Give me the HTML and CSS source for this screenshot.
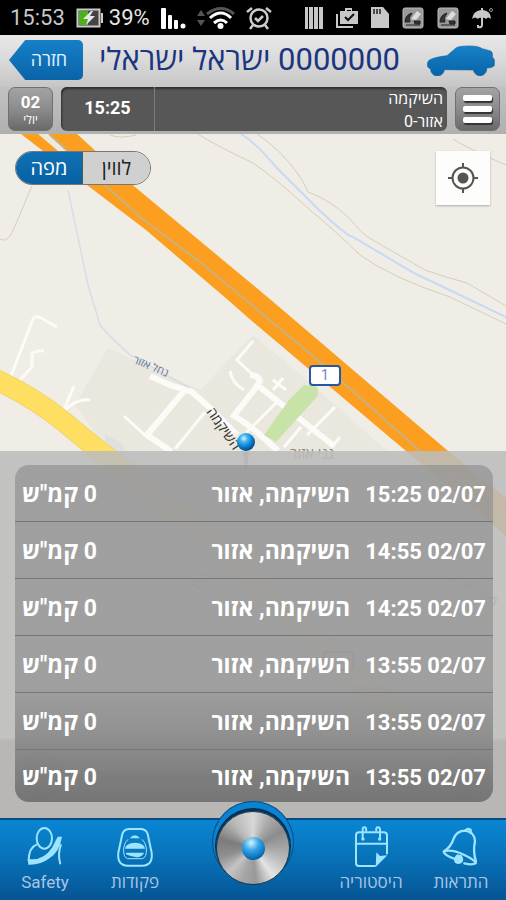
FILE: index.html
```html
<!DOCTYPE html>
<html lang="he" dir="rtl">
<head>
<meta charset="utf-8">
<meta name="viewport" content="width=device-width, initial-scale=1">
<title>ישראל ישראלי</title>
<link rel="stylesheet" href="styles.css">
</head>
<body>
<div class="app">
  <div class="status" dir="ltr">
    <div class="status-group">
      <span class="clock">15:53</span>
      <svg width="28" height="20" viewBox="0 0 28 20"><rect x="1.500" y="1.500" width="22" height="17" fill="#444" stroke="#ccc" stroke-width="2"/><path d="M25 5h2v10h-2z" fill="#ccc"/><path d="M3 3h9v14H3z" fill="#4caf1c"/><path d="M15 3 7 11h5l-2 6 9-9h-5l3-5z" fill="#e8e8e8"/></svg>
      <span class="percent">39%</span>
      <svg class="signal" width="25" height="22" viewBox="0 0 25 22" fill="#fff"><rect x="0" y="1" width="5" height="21" rx="1"/><rect x="7" y="8" width="4" height="14" rx="1"/><rect x="13" y="13" width="4" height="9" rx="1"/><circle cx="22" cy="19" r="2.500"/></svg>
      <svg class="wifi" width="38" height="24" viewBox="0 0 38 24" fill="none"><path d="M4 4 0 10h8zM4 20l-4-6h8z" fill="#555"/><path d="M10 8Q24-3 37 8" stroke="#555" stroke-width="3"/><path d="M13 12Q24 2 34 12M17 17q7-6 13 0" stroke="#fff" stroke-width="3"/><circle cx="23.500" cy="20" r="3" fill="#fff"/></svg>
      <svg width="26" height="24" viewBox="0 0 26 24" fill="none" stroke="#ccc" stroke-width="2.500"><circle cx="13" cy="12" r="8.500"/><path d="m1 6 5-4M25 6l-5-4M7 19l-3 4M19 19l3 4M9 12l3 3 5-5"/></svg>
    </div>
    <div class="status-group end">
      <svg width="18" height="22" viewBox="0 0 18 22" fill="#c8c8c8"><path d="M0 0h3v22H0zM4 0h4v22H4zM9 0h4v22H9zM14 0h4v22h-4z"/></svg>
      <svg width="22" height="22" viewBox="0 0 22 22"><path d="M1 7v13h16" stroke="#c8c8c8" stroke-width="2" fill="none"/><path d="M4 4h5V1h7v3h6v13H4zM11 4h4V3h-4z" fill="#c8c8c8" fill-rule="evenodd"/><path d="m9 10 3 3 6-6" stroke="#111" stroke-width="2" fill="none"/></svg>
      <svg width="18" height="21" viewBox="0 0 18 21"><path d="M0 0h12l6 7v14H0z" fill="#c8c8c8"/><path d="M3 2v5M6 2v5M9 2v5" stroke="#222" stroke-width="1.500"/></svg>
      <svg width="22" height="22" viewBox="0 0 22 22"><rect x="1" y="1" width="20" height="20" rx="2" fill="#999" stroke="#bbb"/><path d="M3 15q0-7 7-9-4 5-2 9zM12 14h6v3h-5zM4 18h14" fill="#333" stroke="#222"/><path d="m9 12 6-8 4 3-5 6z" fill="#ddd"/></svg>
      <svg width="22" height="22" viewBox="0 0 22 22"><rect x="1" y="1" width="20" height="20" rx="2" fill="#999" stroke="#bbb"/><path d="M3 15q0-7 7-9-4 5-2 9zM12 14h6v3h-5zM4 18h14" fill="#333" stroke="#222"/><path d="m9 12 6-8 4 3-5 6z" fill="#ddd"/></svg>
      <svg width="22" height="22" viewBox="0 0 22 22"><path d="M0 12Q1 4 9 3V1h2v2q8 1 8 9-3-3-5 0-2-2-4-1-3-1-4 1-3-3-6 0z" fill="#c8c8c8"/><path d="M10 10v8q0 3-4 2v-2" fill="none" stroke="#c8c8c8" stroke-width="2"/><circle cx="19" cy="3" r="1.500" fill="none" stroke="#999"/></svg>
    </div>
  </div>

  <header class="header">
    <svg class="car" viewBox="525 138 204 92" aria-hidden="true"><defs><linearGradient id="carPaint" x1="0" y1="0" x2="0" y2="1"><stop offset="0" stop-color="#1781c9"/><stop offset="1" stop-color="#0763a8"/></linearGradient></defs><path d="M527 192Q527 178 585 171L612 148Q620 142 652 142Q680 142 690 150L716 157Q723 160 721 174L727 183V200Q722 208 704 208A20 20 0 0 1 664 214L577 213A20 20 0 0 1 536 210Q524 209 527 192Z" fill="url(#carPaint)" stroke="#15619b" stroke-width="2"/></svg>
    <h1 class="title">0000000 ישראל ישראלי</h1>
    <button class="back" type="button">חזרה</button>
  </header>

  <div class="toolbar">
    <button class="tile menu" type="button" aria-label="תפריט"><span></span><span></span><span></span></button>
    <div class="current">
      <div class="address"><span>השיקמה</span><span>אזור-0</span></div>
      <time class="time">15:25</time>
    </div>
    <button class="tile date" type="button"><b>02</b><small>יולי</small></button>
  </div>

  <main class="map">
    <svg class="map-art" viewBox="0 134 506 684" preserveAspectRatio="xMidYMin slice" aria-hidden="true">
      <defs><radialGradient id="pin" cx=".38" cy=".3" r=".7"><stop offset="0" stop-color="#dff5ff"/><stop offset=".3" stop-color="#40b4f0"/><stop offset=".7" stop-color="#0878c8"/><stop offset="1" stop-color="#034a86"/></radialGradient></defs>
      <path d="M0 134h506v684H0z" fill="#f0ede6"/>
      <path d="M108 348 200 390 253 335 300 374 420 480 350 560H190L75 405Z" fill="#e9e7de"/>
      <path d="m105 434 18 10 3 10h-21z" fill="#e0e0e0"/>
      <g fill="none" stroke="#d2cec0"><path d="M32 186 12 233Q6 243 0 239M453 139q12 8 53 26M110 135q10 4 26 0"/><path d="M198 134q15 10 55 29 25 17 57 47 30 25 50 45 30 22 90 42l56 27M257 134q25 17 41 40 7 10 10 18 23 8 43 28 10 13 20 19l54 31q20 7 42 13l39 23" stroke="#d3cfbd"/></g>
      <path d="M241 134q15 9 35 33l42 42q30 28 35 28l61 36 92 44" fill="none" stroke="#c7d9f5" stroke-width="2"/>
      <path d="m68 190 20 95 12 40q10 12 30 30l60 33" fill="none" stroke="#d6dde7" stroke-width="1.500"/>
      <g fill="none" stroke="#fcfbf7" stroke-width="3">
        <path d="m11 376 22-57q3-4 8-1l16 9M19 381l13-14V354q4-4 12-3M63 412l11-26M65 410q12-12 25-10M124 416l25 23M205 412l-30 37M230 371q2 12 14 19M253 341l-16 19 16 15M273 380l13 10M276 403l-30 30M335 407l-28 28M301 427l-17 20M340 437l-8 10M283 378l-10 12"/>
      </g>
      <g fill="none" stroke="#fcfbf7" stroke-width="6"><path d="m150 376 20 9 22 7 18 16 27 27M184 391l-37 44 25 17M232 418l22-28 6-9q-2-6-10-6M256 384l78 62M233 415q20 12 45 36"/></g>
      <path d="m304 385 12 1q5 6-1 13l-39 43-12-7 25-35z" fill="#c8e3a8"/>
      <path d="M-5 379Q35 398 63 421L97 449 200 530 253 582 420 735" fill="none" stroke="#f1d36c" stroke-width="21"/><path d="M-5 379Q35 398 63 421L97 449 200 530 253 582 420 735" fill="none" stroke="#ffdf61" stroke-width="19"/>
      <path d="M21 134 87 185 146 230 228 300 253 322 406 451 506 536V498L448 451 271 300 253 285 135 187 77 134Z" fill="#fc9e20"/>
      <path d="m38 134 20 17h9L49 134z" fill="#eee9df"/><path d="m49 134 56 51 35 32 60 45 53 44 67 56 100 89 86 70" fill="none" stroke="#ccb07d" stroke-width="2"/>
      <rect x="310" y="366" width="30" height="19" rx="3" fill="#fff" stroke="#2457a6" stroke-width="2"/>
      <g class="map-text"><text x="325" y="380" fill="#6d87bf">1</text><text x="151" y="370" transform="rotate(23 151 366)" font-size="11" fill="#657793">נחל אזור</text><text x="223" y="433" transform="rotate(55 223 429)" font-size="14" fill="#303030">השיקמה</text><text x="312" y="459" font-size="15" fill="#8f8a7c">גני אזור</text><text x="196" y="592" transform="rotate(-45 196 592)" font-size="13" fill="#777">המרכבה</text><text class="small" x="474" y="593" transform="rotate(33 474 593)" fill="#666">משה שרת</text></g>
      <path d="m246 480-3-28h6z" fill="#9a9a9a"/><circle cx="246" cy="442" r="9" fill="url(#pin)"/>
      <rect x="324" y="652" width="29" height="18" rx="3" fill="#ddd" stroke="#555" stroke-width="2"/>
      <g fill="#5d7f95"><circle cx="42" cy="776" r="24"/><circle cx="466" cy="776" r="24"/></g><path d="M65 770h378v12H65z" fill="#777"/>
    </svg>
    <div class="map-controls">
      <button class="locate" type="button" aria-label="המיקום שלי"><svg width="30" height="30" viewBox="0 0 30 30" fill="none" stroke="#555" stroke-width="2"><circle cx="15" cy="15" r="10.500"/><circle cx="15" cy="15" r="5.500" fill="#555" stroke="none"/><path d="M15 0v5M15 25v5M0 15h5M25 15h5"/></svg></button>
      <div class="switch"><button type="button">לווין</button><button class="on" type="button">מפה</button></div>
    </div>
    <section class="panel">
      <table class="log">
        <tbody>
          <tr><td class="when"><bdi dir="ltr">15:25 02/07</bdi></td><td>השיקמה, אזור</td><td class="speed">0 קמ"ש</td></tr>
          <tr><td class="when"><bdi dir="ltr">14:55 02/07</bdi></td><td>השיקמה, אזור</td><td class="speed">0 קמ"ש</td></tr>
          <tr><td class="when"><bdi dir="ltr">14:25 02/07</bdi></td><td>השיקמה, אזור</td><td class="speed">0 קמ"ש</td></tr>
          <tr><td class="when"><bdi dir="ltr">13:55 02/07</bdi></td><td>השיקמה, אזור</td><td class="speed">0 קמ"ש</td></tr>
          <tr><td class="when"><bdi dir="ltr">13:55 02/07</bdi></td><td>השיקמה, אזור</td><td class="speed">0 קמ"ש</td></tr>
          <tr><td class="when"><bdi dir="ltr">13:55 02/07</bdi></td><td>השיקמה, אזור</td><td class="speed">0 קמ"ש</td></tr>
        </tbody>
      </table>
    </section>
  </main>

  <nav class="nav">
    <a href="#alerts"><svg viewBox="570 290 120 126"><g fill="none" stroke="#9de4ff" stroke-width="7" stroke-linecap="round" stroke-linejoin="round"><path d="M580 365Q600 352 607 330Q616 304 644 304Q672 309 672 337Q665 365 675 397"/><path d="M612 389Q580 377 578 367Q600 358 640 377Q672 392 674 402Q664 408 640 402M645 302q5-7 14 0v9"/></g><path d="M618 375q-14 14-6 25 12 9 22-1 6-9-2-21z" fill="#9de4ff"/></svg><span>התראות</span></a>
    <a href="#history"><svg viewBox="296 290 120 126"><g fill="none" stroke="#9de4ff" stroke-width="6"><path d="M370 410H320Q311 410 311 400V318Q311 309 320 309H394Q404 309 404 318V375M311 343H404"/><path d="M331 330V301Q331 292 337 294 343 294 341 306M372 306Q370 293 378 294 383 294 383 303V330"/></g><path d="M405 378 370 413 372 369 383 380z" fill="#9de4ff"/><circle cx="332" cy="329" r="5" fill="#9de4ff"/><circle cx="382" cy="329" r="5" fill="#9de4ff"/></svg><span>היסטוריה</span></a>
    <button class="knob" type="button" aria-label="ראשי"><i></i></button>
    <a href="#commands"><svg viewBox="347 290 120 126"><path d="M388 299H426Q440 300 445 314L457 370Q461 409 429 409H385Q353 409 357 370L369 314Q374 300 388 299Z" fill="none" stroke="#9de4ff" stroke-width="6"/><path d="M391 327q16-18 31 0zM377 358q2-17 30-18 28 1 30 18zM380 370h54q-10 24-54 5z" fill="#9de4ff"/><path d="M386 330q-10 8-13 26-2 28 12 32h44q14-4 12-32-3-18-13-26" fill="none" stroke="#9de4ff" stroke-width="3"/></svg><span>פקודות</span></a>
    <a href="#safety"><svg viewBox="77 290 120 126"><g fill="none" stroke="#9de4ff" stroke-width="6"><ellipse cx="135" cy="327" rx="23" ry="31"/><path d="M113 345Q88 354 88 395M185 345Q174 374 183 405"/></g><path d="M85 388Q130 397 158 355L175 322H188Q181 367 150 387 126 407 87 406z" fill="#9de4ff"/></svg><span>Safety</span></a>
  </nav>
</div>
</body>
</html>
```

FILE: styles.css
```css
* { box-sizing: border-box; }

body {
  margin: 0;
  font-family: Roboto, "Open Sans", "Liberation Sans", sans-serif;
  background: #000;
}

button {
  font: inherit;
  padding: 0;
  border: 0;
  cursor: pointer;
}

svg { display: block; flex: none; }

.app {
  display: flex;
  flex-direction: column;
  min-height: 100vh;
}

.status {
  display: flex;
  justify-content: space-between;
  align-items: center;
  height: 35px;
  padding: 0 12px 0 10px;
  background: #000;
  color: #c8c8c8;
  font-size: 22px;
}

.status-group {
  display: flex;
  align-items: center;
  gap: 11px;
}

.status-group.end { gap: 13px; }
.percent { margin-left: -6px; color: #e4e4e4; }

.header {
  display: flex;
  align-items: center;
  height: 52px;
  padding: 0 11px 2px 9px;
  background: linear-gradient(#e8e8e8, #d9d9d9 50%, #c6c6c6);
}

.car { width: 68px; height: 32px; }

.title {
  flex: 1;
  margin: 0 27px 0 12px;
  color: #1b3580;
  font-size: 31px;
  font-weight: 400;
  line-height: 44px;
  white-space: nowrap;
}

.back {
  width: 74px;
  height: 40px;
  padding: 0 0 2px 6px;
  border-radius: 5px;
  clip-path: polygon(0 50%, 22% 0, 100% 0, 100% 100%, 22% 100%);
  background: linear-gradient(#1580c8, #0a63a8);
  color: #e3f3ff;
  font-size: 18px;
  font-weight: 500;
}

.toolbar {
  display: flex;
  gap: 8px;
  padding: 0 6px 3px 8px;
  background: linear-gradient(#c2c2c2, #b0b0b0);
}

.tile {
  display: flex;
  flex-direction: column;
  align-items: center;
  justify-content: center;
  width: 45px;
  height: 44px;
  border: 1px solid #707070;
  border-radius: 7px;
  background: linear-gradient(#a3a3a3, #8c8c8c 50%, #696969);
  color: #fff;
}

.menu { gap: 5px; }

.menu span {
  width: 29px;
  height: 6px;
  border-radius: 2px;
  background: #fff;
  box-shadow: 1px 2px 1px #333;
}

.date b { font-size: 17px; line-height: 22px; }
.date small { font-size: 12px; line-height: 14px; }

.current {
  display: flex;
  flex: 1;
  height: 44px;
  border-radius: 6px;
  background: #575757;
  box-shadow: inset 1px 2px 2px #303030;
  color: #fff;
}

.address {
  display: flex;
  flex: 1;
  flex-direction: column;
  padding-right: 4px;
  font-size: 16px;
  line-height: 23px;
}

.time {
  width: 94px;
  border-right: 1px solid #7c7c7c;
  font-size: 18px;
  font-weight: 700;
  line-height: 41px;
  text-align: center;
}

.map {
  position: relative;
  display: flex;
  flex: 1;
  flex-direction: column;
  justify-content: space-between;
  overflow: hidden;
}

.map-art {
  position: absolute;
  inset: 0;
  width: 100%;
  height: 100%;
}

.map-text { font-size: 14px; text-anchor: middle; }
.map-text .small { font-size: 12px; }

.map-controls {
  position: relative;
  display: flex;
  justify-content: space-between;
  align-items: flex-start;
  padding: 17px 16px 0 15px;
}

.locate {
  display: grid;
  place-items: center;
  width: 54px;
  height: 54px;
  background: #fdfdfb;
  box-shadow: 0 1px 2px #aaa;
}

.switch {
  display: flex;
  overflow: hidden;
  border: 1px solid #777;
  border-radius: 17px;
}

.switch button {
  width: 67px;
  height: 32px;
  background: #d0d0d0;
  color: #222;
  font-size: 20px;
  line-height: 32px;
}

.switch .on {
  border-right: 1px solid #555;
  background: linear-gradient(#1070b4, #0861a3);
  color: #fff;
}

.panel {
  position: relative;
  padding: 14px 13px 16px 15px;
  background: linear-gradient(rgba(188, 188, 188, .87) 78%, rgba(178, 177, 175, .9) 79%);
}

.log {
  width: 100%;
  border-spacing: 0;
  border-radius: 14px;
  background: linear-gradient(rgba(148, 148, 148, .75) 65%, rgba(132, 132, 132, .85) 83%, rgba(110, 110, 110, .9));
  color: #fff;
  font-size: 23px;
  font-weight: 700;
  line-height: 26px;
}

.log td {
  height: 57px;
  padding: 3px 0 0 15px;
  border-bottom: 1px solid #777;
  white-space: nowrap;
}

.log tr:last-child td { height: 52px; border-bottom: 0; }
.log .when { width: 1px; padding-right: 7px; font-size: 22px; }
.log .speed { padding-left: 7px; text-align: left; }

.nav {
  position: relative;
  display: grid;
  grid-template-columns: 1fr 1fr 146px 1fr 1fr;
  height: 82px;
  border-top: 2px solid #0a4b83;
  background: linear-gradient(#0a86d3, #0873ba 45%, #055594);
}

.nav a {
  display: flex;
  flex-direction: column;
  align-items: center;
  padding-top: 6px;
  color: #a9c5e4;
  font-size: 17px;
  line-height: 28px;
  text-decoration: none;
}

.nav a svg { width: 40px; height: 42px; }

.knob {
  display: grid;
  place-items: center;
  justify-self: center;
  width: 74px;
  height: 74px;
  margin-top: -9px;
  border: 1px solid #18354c;
  border-radius: 50%;
  background: conic-gradient(#d8d8d8, #aaa 30deg, #8c8c8c 60deg, #aaa 95deg, #c4c4c4 120deg, #e4e4e4 145deg, #999 175deg, #a8a8a8 200deg, #c4c4c4 225deg, #8f8f8f 255deg, #7c7c7c 285deg, #b5b5b5 320deg, #d8d8d8);
  box-shadow: 0 -2px 0 1px #082f50, 0 -6px 0 3px #0a83d2, 0 -6px 0 4px #0a4b83;
}

.knob i {
  width: 23px;
  height: 23px;
  border-radius: 50%;
  background: radial-gradient(circle at 40% 25%, #d8f3ff, #36a6e8 35%, #0568b0 75%, #033b70);
}
```
